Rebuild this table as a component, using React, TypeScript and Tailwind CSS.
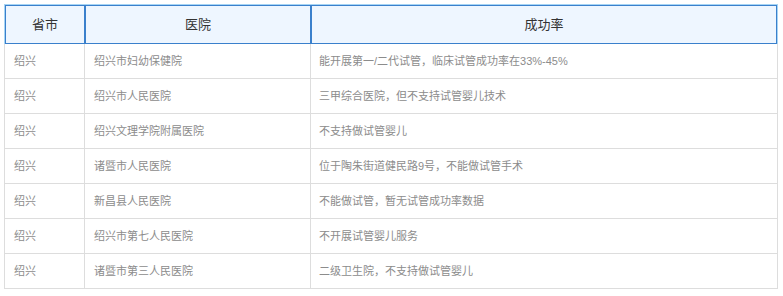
const rows = [
  ['绍兴', '绍兴市妇幼保健院', '能开展第一/二代试管，临床试管成功率在33%-45%'],
  ['绍兴', '绍兴市人民医院', '三甲综合医院，但不支持试管婴儿技术'],
  ['绍兴', '绍兴文理学院附属医院', '不支持做试管婴儿'],
  ['绍兴', '诸暨市人民医院', '位于陶朱街道健民路9号，不能做试管手术'],
  ['绍兴', '新昌县人民医院', '不能做试管，暂无试管成功率数据'],
  ['绍兴', '绍兴市第七人民医院', '不开展试管婴儿服务'],
  ['绍兴', '诸暨市第三人民医院', '二级卫生院，不支持做试管婴儿'],
]

export default function App() {
  return (
    <div className="min-h-screen bg-white pt-1 pl-1 font-['Liberation_Sans','Noto_Sans_CJK_SC',sans-serif]">
      <div className="w-[774px]">
        {/* header */}
        <div className="flex border-t border-l border-r border-[#a6d4f4]">
          <div className="flex h-[39px] w-[80px] items-center justify-center border border-[#3a80cc] bg-[#eef6ff] text-[13px] text-[#333]">
            省市
          </div>
          <div className="flex h-[39px] w-[226px] items-center justify-center border border-[#3a80cc] bg-[#eef6ff] text-[13px] text-[#333]">
            医院
          </div>
          <div className="flex h-[39px] w-[466px] items-center justify-center border border-[#3a80cc] bg-[#eef6ff] text-[13px] text-[#333]">
            成功率
          </div>
        </div>

        {/* body */}
        {rows.map((r, i) => (
          <div key={i} className="flex h-[35px] border-l border-b border-[#dddddd] text-[11px] text-[#8c8c8c]">
            <div className="flex w-[80px] items-center border-r border-[#dddddd] pl-[9px]">{r[0]}</div>
            <div className="flex w-[226px] items-center border-r border-[#dddddd] pl-[9px]">{r[1]}</div>
            <div className="flex w-[467px] items-center border-r border-[#dddddd] pl-[8px]">{r[2]}</div>
          </div>
        ))}
      </div>
    </div>
  )
}
